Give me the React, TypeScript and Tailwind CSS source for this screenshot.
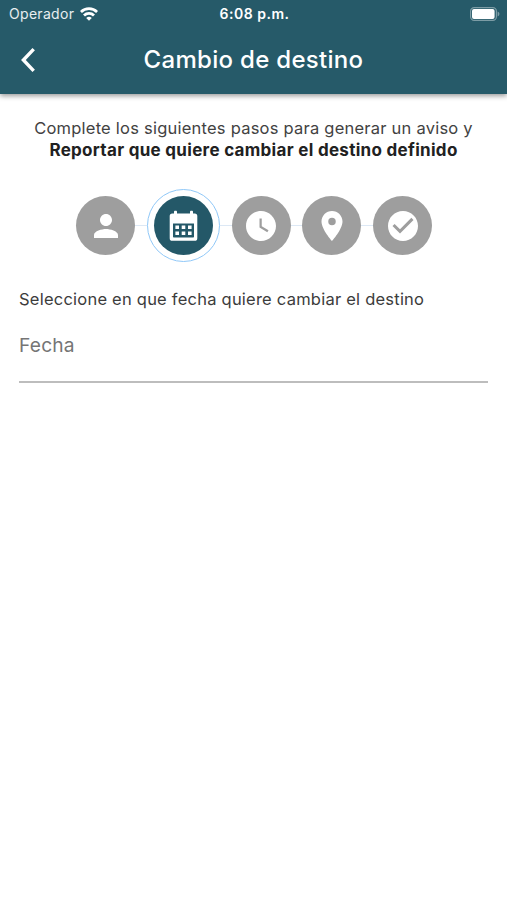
import React from 'react';
import { MdCheckCircle, MdLocationOn, MdPerson, MdWatchLater } from 'react-icons/md';

type Step = {
  id: string;
  label: string;
  icon: React.ComponentType<{ className?: string }>;
};

// Month sheet with two binder pegs and a 3x2 grid of days
function CalendarIcon({ className }: { className?: string }) {
  return (
    <svg viewBox="0 0 36 36" className={className} fill="currentColor">
      <rect x="9" y="2.8" width="3" height="5" rx="0.8" />
      <rect x="25" y="2.8" width="3" height="5" rx="0.8" />
      <path
        fillRule="evenodd"
        d="M7.3 5.4h22.4a2.6 2.6 0 0 1 2.6 2.6v22.2a2.6 2.6 0 0 1-2.6 2.6H7.3a2.6 2.6 0 0 1-2.6-2.6V8a2.6 2.6 0 0 1 2.6-2.6zM8 15.4v13.4a.8.8 0 0 0 .8.8h19.4a.8.8 0 0 0 .8-.8V15.4z"
      />
      <path d="M10.4 17.6h3.6v3.5h-3.6zM16.7 17.6h3.6v3.5h-3.6zM23 17.6h3.6v3.5h-3.6zM10.4 23.5h3.6v3.5h-3.6zM16.7 23.5h3.6v3.5h-3.6zM23 23.5h3.6v3.5h-3.6z" />
    </svg>
  );
}

const STEPS: Step[] = [
  { id: 'person', label: 'Persona', icon: MdPerson },
  { id: 'date', label: 'Fecha', icon: CalendarIcon },
  { id: 'time', label: 'Hora', icon: MdWatchLater },
  { id: 'place', label: 'Destino', icon: MdLocationOn },
  { id: 'confirm', label: 'Confirmar', icon: MdCheckCircle },
];

function BackIcon() {
  return (
    <svg viewBox="0 0 14 24" className="w-[14px] h-[24px]" fill="none" stroke="white" strokeWidth="3.4">
      <path d="M12.7 1.2 2.4 12l10.3 10.8" />
    </svg>
  );
}

function WifiIcon() {
  return (
    <svg viewBox="0 0 18 14" className="w-[18px] h-[14px]" fill="none" stroke="white" strokeWidth="2.8">
      <path d="M0.9 5a11.5 11.5 0 0 1 16.2 0" />
      <path d="M4 8.4a7.1 7.1 0 0 1 10 0" />
      <path d="M9 13.8 6.2 11a4 4 0 0 1 5.6 0z" fill="white" stroke="none" />
    </svg>
  );
}

function BatteryIcon() {
  return (
    <svg viewBox="0 0 30 14" className="w-[30px] h-[14px]">
      <rect x="0.6" y="0.6" width="25.8" height="12.8" rx="3.6" fill="none" stroke="white" strokeOpacity="0.4" strokeWidth="1.2" />
      <rect x="2" y="2" width="22.6" height="10" rx="2" fill="white" />
      <path d="M27.6 4.6c1.2.4 1.8 1.3 1.8 2.4s-.6 2-1.8 2.4z" fill="white" fillOpacity="0.4" />
    </svg>
  );
}

function StatusBar() {
  return (
    <div className="grid grid-cols-3 items-center h-[27px] pl-[9px] pr-[7px] text-[14px] leading-none">
      <div className="flex items-center gap-[6px]">
        <span className="tracking-[0.3px] text-white/90">Operador</span>
        <WifiIcon />
      </div>
      <span className="text-center font-semibold tracking-[0.5px]">6:08 p.m.</span>
      <div className="flex justify-end">
        <BatteryIcon />
      </div>
    </div>
  );
}

function Stepper({ active }: { active: number }) {
  return (
    <div className="flex items-center justify-center h-[73px] mt-[28px] ml-px">
      {STEPS.map((step, index) => {
        const Icon = step.icon;
        const isActive = index === active;

        return (
          <React.Fragment key={step.id}>
            {index > 0 && <div className="w-[11.75px] h-px bg-[#dce8f5]" />}
            <div className={isActive ? 'rounded-full border border-[#90c8f8] p-[6px]' : ''}>
              <div
                aria-label={step.label}
                className={`flex items-center justify-center size-[59px] rounded-full text-white ${
                  isActive ? 'bg-[#245868]' : 'bg-[#9e9e9e]'
                }`}
              >
                <Icon className="size-[36px]" />
              </div>
            </div>
          </React.Fragment>
        );
      })}
    </div>
  );
}

export default function App() {
  return (
    <div className="min-h-[900px] bg-white font-['Inter','Liberation_Sans',sans-serif]">
      <header className="h-[94px] bg-[#265a69] text-white shadow-[0_2px_5px_rgba(0,0,0,0.4)]">
        <StatusBar />
        <div className="grid grid-cols-[60px_1fr_60px] items-center h-[65px]">
          <button type="button" aria-label="Volver" className="pl-[21px]">
            <BackIcon />
          </button>
          <h1 className="text-center text-[24px] font-medium leading-none tracking-[0.3px]">Cambio de destino</h1>
        </div>
      </header>

      <main className="px-[19px] pt-[23px]">
        <p className="text-center text-[16.5px] leading-[22px] tracking-[0.23px] text-[#424242] whitespace-nowrap">
          Complete los siguientes pasos para generar un aviso y
          <br />
          <b className="font-bold text-[17px] tracking-[0.3px] text-[#212121]">Reportar que quiere cambiar el destino definido</b>
        </p>

        <Stepper active={1} />

        {/* Date field */}
        <p className="mt-[26px] text-[16.5px] leading-[22px] tracking-[0.23px] text-[#3c3c3c] whitespace-nowrap">
          Seleccione en que fecha quiere cambiar el destino
        </p>
        <div className="mt-[11px] h-[62px] pt-[12px] border-b-2 border-[#bdbdbd] text-[19.2px] leading-[24px] tracking-[0.2px] text-[#757575]">
          Fecha
        </div>
      </main>
    </div>
  );
}
